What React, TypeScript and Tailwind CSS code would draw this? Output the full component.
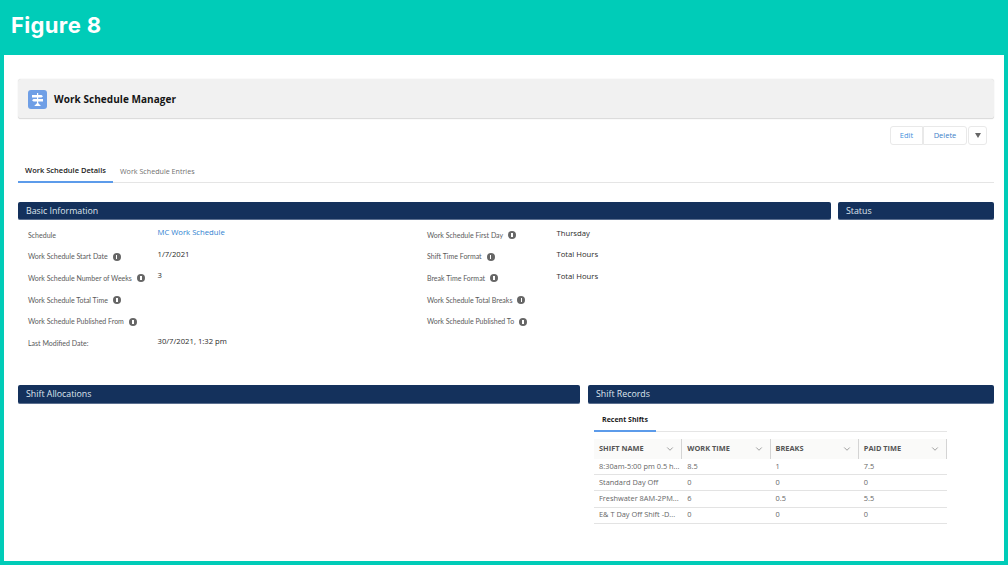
import { ChevronDown } from "lucide-react";

const font = { sans: "font-['Open_Sans','Liberation_Sans',sans-serif]" };

function InfoDot() {
  return (
    <span className="ml-[5px] flex h-[8px] w-[8px] shrink-0 items-center justify-center rounded-full bg-[#666666]">
      <span className="h-[4px] w-[1.5px] bg-white" />
    </span>
  );
}

function SectionBar({ title, className }: { title: string; className: string }) {
  return (
    <div className={`flex h-[18px] items-center rounded-[2px] border-b border-[#5b6f8f] bg-[#14315c] pl-[8px] pt-[2px] text-[8.8px] text-[#dfe5ee] ${className}`}>
      {title}
    </div>
  );
}

function Field({ label, value, info, link, right }: { label: string; value?: string; info?: boolean; link?: boolean; right?: boolean }) {
  return (
    <div className="flex h-[21.7px] items-center">
      <div className="flex w-[129.5px] items-center font-['Lato',sans-serif] text-[7px] text-[#5a5a5a]">
        <span className="whitespace-nowrap">{label}</span>
        {info && <InfoDot />}
      </div>
      {value && (
        <span className={`text-[7.7px] whitespace-nowrap ${right ? "-mt-[3px]" : "-mt-[4px]"} ${link ? "text-[#2f7fd0]" : "text-[#2b2b2b]"}`}>
          {value}
        </span>
      )}
    </div>
  );
}

const leftFields = [
  { label: "Schedule", value: "MC Work Schedule", link: true },
  { label: "Work Schedule Start Date", value: "1/7/2021", info: true },
  { label: "Work Schedule Number of Weeks", value: "3", info: true },
  { label: "Work Schedule Total Time", info: true },
  { label: "Work Schedule Published From", info: true },
  { label: "Last Modified Date:", value: "30/7/2021, 1:32 pm" },
];

const rightFields = [
  { label: "Work Schedule First Day", value: "Thursday", info: true },
  { label: "Shift Time Format", value: "Total Hours", info: true },
  { label: "Break Time Format", value: "Total Hours", info: true },
  { label: "Work Schedule Total Breaks", info: true },
  { label: "Work Schedule Published To", info: true },
];

const shifts = [
  ["8:30am-5:00 pm 0.5 h...", "8.5", "1", "7.5"],
  ["Standard Day Off", "0", "0", "0"],
  ["Freshwater 8AM-2PM...", "6", "0.5", "5.5"],
  ["E& T Day Off Shift -D...", "0", "0", "0"],
];

export default function App() {
  return (
    <div className={`flex h-[565px] w-[1008px] flex-col overflow-hidden bg-[#00ccb8] ${font.sans}`}>
      <div className="flex h-[55px] shrink-0 items-center pb-[5px] pl-[11px] font-['Inter',sans-serif] text-[22px] font-bold tracking-[0.35px] text-white">
        Figure 8
      </div>

      <div className="mx-[4px] mb-[4px] flex-1 bg-white pl-[14px] pr-[10px] pt-[24px]">
        <div className="flex h-[40px] items-center rounded-[3px] border-b border-[#dcdcdc] bg-[#f1f1f1] pl-[10px] pt-[1px] shadow-[0_0_1px_#c9c9c9]">
          <div className="flex h-[19px] w-[19px] items-center justify-center rounded-[3px] bg-[#6f9fe6]">
            <svg viewBox="0 0 19 19" className="h-[19px] w-[19px]" fill="white">
              <rect x="9" y="3" width="1.2" height="12" />
              <path d="M4 5 H13.5 L15 6.2 L13.5 7.4 H4 Z" />
              <path d="M15 9 H5.5 L4 10.2 L5.5 11.4 H15 Z" />
              <path d="M9.6 12.5 L13 16 H6.2 Z" />
            </svg>
          </div>
          <span className="ml-[7px] text-[10px] font-bold tracking-[0.05px] text-[#151515]">Work Schedule Manager</span>
        </div>

        <div className="mt-[7px] flex justify-end pr-[7px] text-[7.5px]">
          <div className="flex h-[19px] w-[33px] items-center justify-center rounded-l-[3px] border border-[#e9e9e9] text-[#3d8fdc]">Edit</div>
          <div className="flex h-[19px] w-[44px] items-center justify-center rounded-r-[3px] border border-[#e9e9e9] text-[#3d7fc8]">Delete</div>
          <div className="ml-[1px] flex h-[19px] w-[19px] items-center justify-center rounded-[3px] border border-[#e9e9e9]">
            <span className="h-0 w-0 border-x-[3.5px] border-t-[5px] border-x-transparent border-t-[#666666]" />
          </div>
        </div>

        <div className="mt-[18px] flex h-[20px] items-start border-b border-[#e5e5e5] text-[7.15px]">
          <div className="flex h-[20px] w-[95px] items-center justify-center border-b-[2px] border-[#5c9bea] pb-[2px] text-[7.5px] font-semibold text-[#222222]">Work Schedule Details</div>
          <div className="ml-[7px] flex h-[17px] items-center text-[#707070]">Work Schedule Entries</div>
        </div>

        <div className="mt-[19px] flex gap-[7px]">
          <SectionBar title="Basic Information" className="w-[813px]" />
          <SectionBar title="Status" className="w-[156px] pl-[6px]" />
        </div>

        <div className="mt-[4px] flex h-[161px] pl-[10px]">
          <div className="w-[399px]">
            {leftFields.map((f) => (
              <Field key={f.label} {...f} />
            ))}
          </div>
          <div>
            {rightFields.map((f) => (
              <Field key={f.label} {...f} right />
            ))}
          </div>
        </div>

        <div className="flex gap-[8px]">
          <SectionBar title="Shift Allocations" className="h-[19px] w-[562px]" />
          <div className="w-[406px]">
            <SectionBar title="Shift Records" className="h-[19px] w-[406px] pl-[6px]" />
            <div className="ml-[6px] mt-[9px] w-[353px]">
              <div className="flex h-[19px] items-start border-b border-[#e5e5e5]">
                <div className="flex h-[19px] w-[62px] items-center justify-center border-b-[2px] border-[#5c9bea] pb-[3px] text-[7px] font-bold text-[#1b1b1b]">
                  Recent Shifts
                </div>
              </div>
              <div className="mt-[7px] grid grid-cols-4 text-[7.4px]">
                {["SHIFT NAME", "WORK TIME", "BREAKS", "PAID TIME"].map((h) => (
                  <div key={h} className="flex h-[20px] items-center justify-between border-r border-[#d4d4d4] bg-[#fafaf9] pl-[5px] pr-[6px] font-bold text-[#555555]">
                    {h}
                    <ChevronDown className="h-[10px] w-[10px] text-[#666666]" strokeWidth={1.5} />
                  </div>
                ))}
              </div>
              {shifts.map((row) => (
                <div key={row[0]} className="grid h-[16.2px] grid-cols-4 items-center border-b border-[#e3e3e3] pb-[1px] text-[7.4px] text-[#666666]">
                  {row.map((c, i) => (
                    <span key={i} className="pl-[5px] whitespace-nowrap">{c}</span>
                  ))}
                </div>
              ))}
            </div>
          </div>
        </div>
      </div>
    </div>
  );
}
